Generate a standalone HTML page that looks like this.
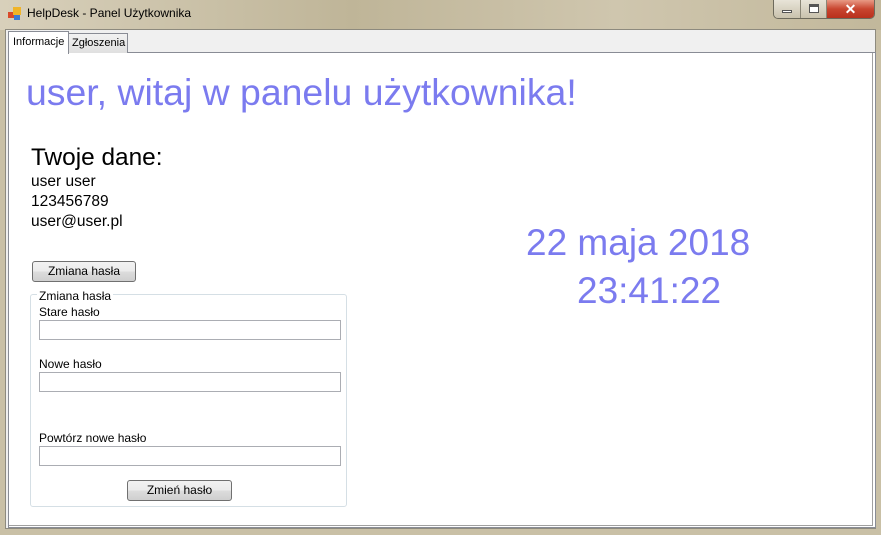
<!DOCTYPE html>
<html><head><meta charset="utf-8"><style>
*{margin:0;padding:0;box-sizing:border-box}
body{width:881px;height:535px;overflow:hidden;background:#c9c0a6;font-family:"Liberation Sans",sans-serif;position:relative}
.abs{position:absolute}
.t{font-size:12px;color:#000;white-space:nowrap}
.btn{position:absolute;border:1px solid #707070;border-radius:3px;background:linear-gradient(#f2f2f2,#ebebeb 50%,#dddddd 50%,#cfcfcf);font-size:12px;text-align:center;line-height:19px}
.inp{position:absolute;border:1px solid #abadb3;background:#fff;height:20px}
</style></head><body>
<div class="abs" style="left:0;top:0;width:881px;height:30px;background:linear-gradient(90deg,#d8d0bb,#bfb598 40%,#cfc6ae 70%,#c2b89b)"></div>
<svg class="abs" style="left:8px;top:7px" width="14" height="14"><rect x="0" y="5" width="6" height="6" fill="#d94a2a"/><rect x="5" y="0" width="8" height="8" fill="#f0b429"/><rect x="6" y="8" width="6" height="5" fill="#3a7bd5"/></svg>
<div class="abs t" style="left:27px;top:6px;font-size:12px">HelpDesk - Panel Użytkownika</div>
<div class="abs" style="left:773px;top:0;width:102px;height:19px;border:1px solid #6d6a5c;border-top:none;border-radius:0 0 5px 5px;overflow:hidden;display:flex">
<div style="width:27px;background:linear-gradient(#e8e4d8,#c9c2ad);border-right:1px solid #8a8676;position:relative"><div style="position:absolute;left:8px;top:10px;width:10px;height:3px;border:1px solid #555;background:#fff"></div></div>
<div style="width:26px;background:linear-gradient(#e8e4d8,#c9c2ad);border-right:1px solid #8a8676;position:relative"><div style="position:absolute;left:8px;top:4px;width:10px;height:9px;border:1px solid #555;border-top-width:3px;background:#fff"></div></div>
<div style="flex:1;background:linear-gradient(#e89a85,#c8452f 50%,#b9301c);color:#fff;font-weight:bold;text-align:center;font-size:14px;line-height:18px">✕</div>
</div>
<div class="abs" style="left:5px;top:29px;width:871px;height:500px;background:#f0f0f0;border:1px solid #8d8a7e"></div>
<div class="abs" style="left:8px;top:52px;width:868px;height:476px;background:#fff;border:1px solid #898c95;border-top-color:#898c95"></div>
<div class="abs" style="left:9px;top:53px;width:864px;height:473px;border-right:1px solid #a0a0a0;border-bottom:1px solid #a0a0a0"></div>
<div class="abs" style="left:8px;top:31px;width:61px;height:23px;background:#fff;border:1px solid #898c95;border-bottom:none"></div>
<div class="abs t" style="left:13px;top:36px;font-size:11px">Informacje</div>
<div class="abs" style="left:68px;top:33px;width:60px;height:20px;background:linear-gradient(#f2f2f2,#e0e0e0);border:1px solid #898c95;border-bottom:none"></div>
<div class="abs t" style="left:72px;top:37px;font-size:11px">Zgłoszenia</div>
<div class="abs" style="left:26px;top:71px;font-size:37.4px;color:#7b7bef;white-space:nowrap">user, witaj w panelu użytkownika!</div>
<div class="abs" style="left:31px;top:144px;font-size:24.4px;color:#000;white-space:nowrap">Twoje dane:</div>
<div class="abs" style="left:31px;top:172px;font-size:15.5px;line-height:20px;color:#000">user user<br>123456789<br>user@user.pl</div>
<div class="abs" style="left:526px;top:222px;font-size:37px;color:#7b7bef;white-space:nowrap">22 maja 2018</div>
<div class="abs" style="left:577px;top:270px;font-size:37px;color:#7b7bef;white-space:nowrap">23:41:22</div>
<div class="btn" style="left:32px;top:261px;width:104px;height:21px">Zmiana hasła</div>
<div class="abs" style="left:30px;top:294px;width:317px;height:213px;border:1px solid #d5dfe5;border-radius:3px"></div>
<div class="abs t" style="left:37px;top:289px;background:#fff;padding:0 2px">Zmiana hasła</div>
<div class="abs t" style="left:39px;top:305px">Stare hasło</div>
<div class="inp" style="left:39px;top:320px;width:302px"></div>
<div class="abs t" style="left:39px;top:357px">Nowe hasło</div>
<div class="inp" style="left:39px;top:372px;width:302px"></div>
<div class="abs t" style="left:39px;top:431px">Powtórz nowe hasło</div>
<div class="inp" style="left:39px;top:446px;width:302px"></div>
<div class="btn" style="left:127px;top:480px;width:105px;height:21px">Zmień hasło</div>
</body></html>
